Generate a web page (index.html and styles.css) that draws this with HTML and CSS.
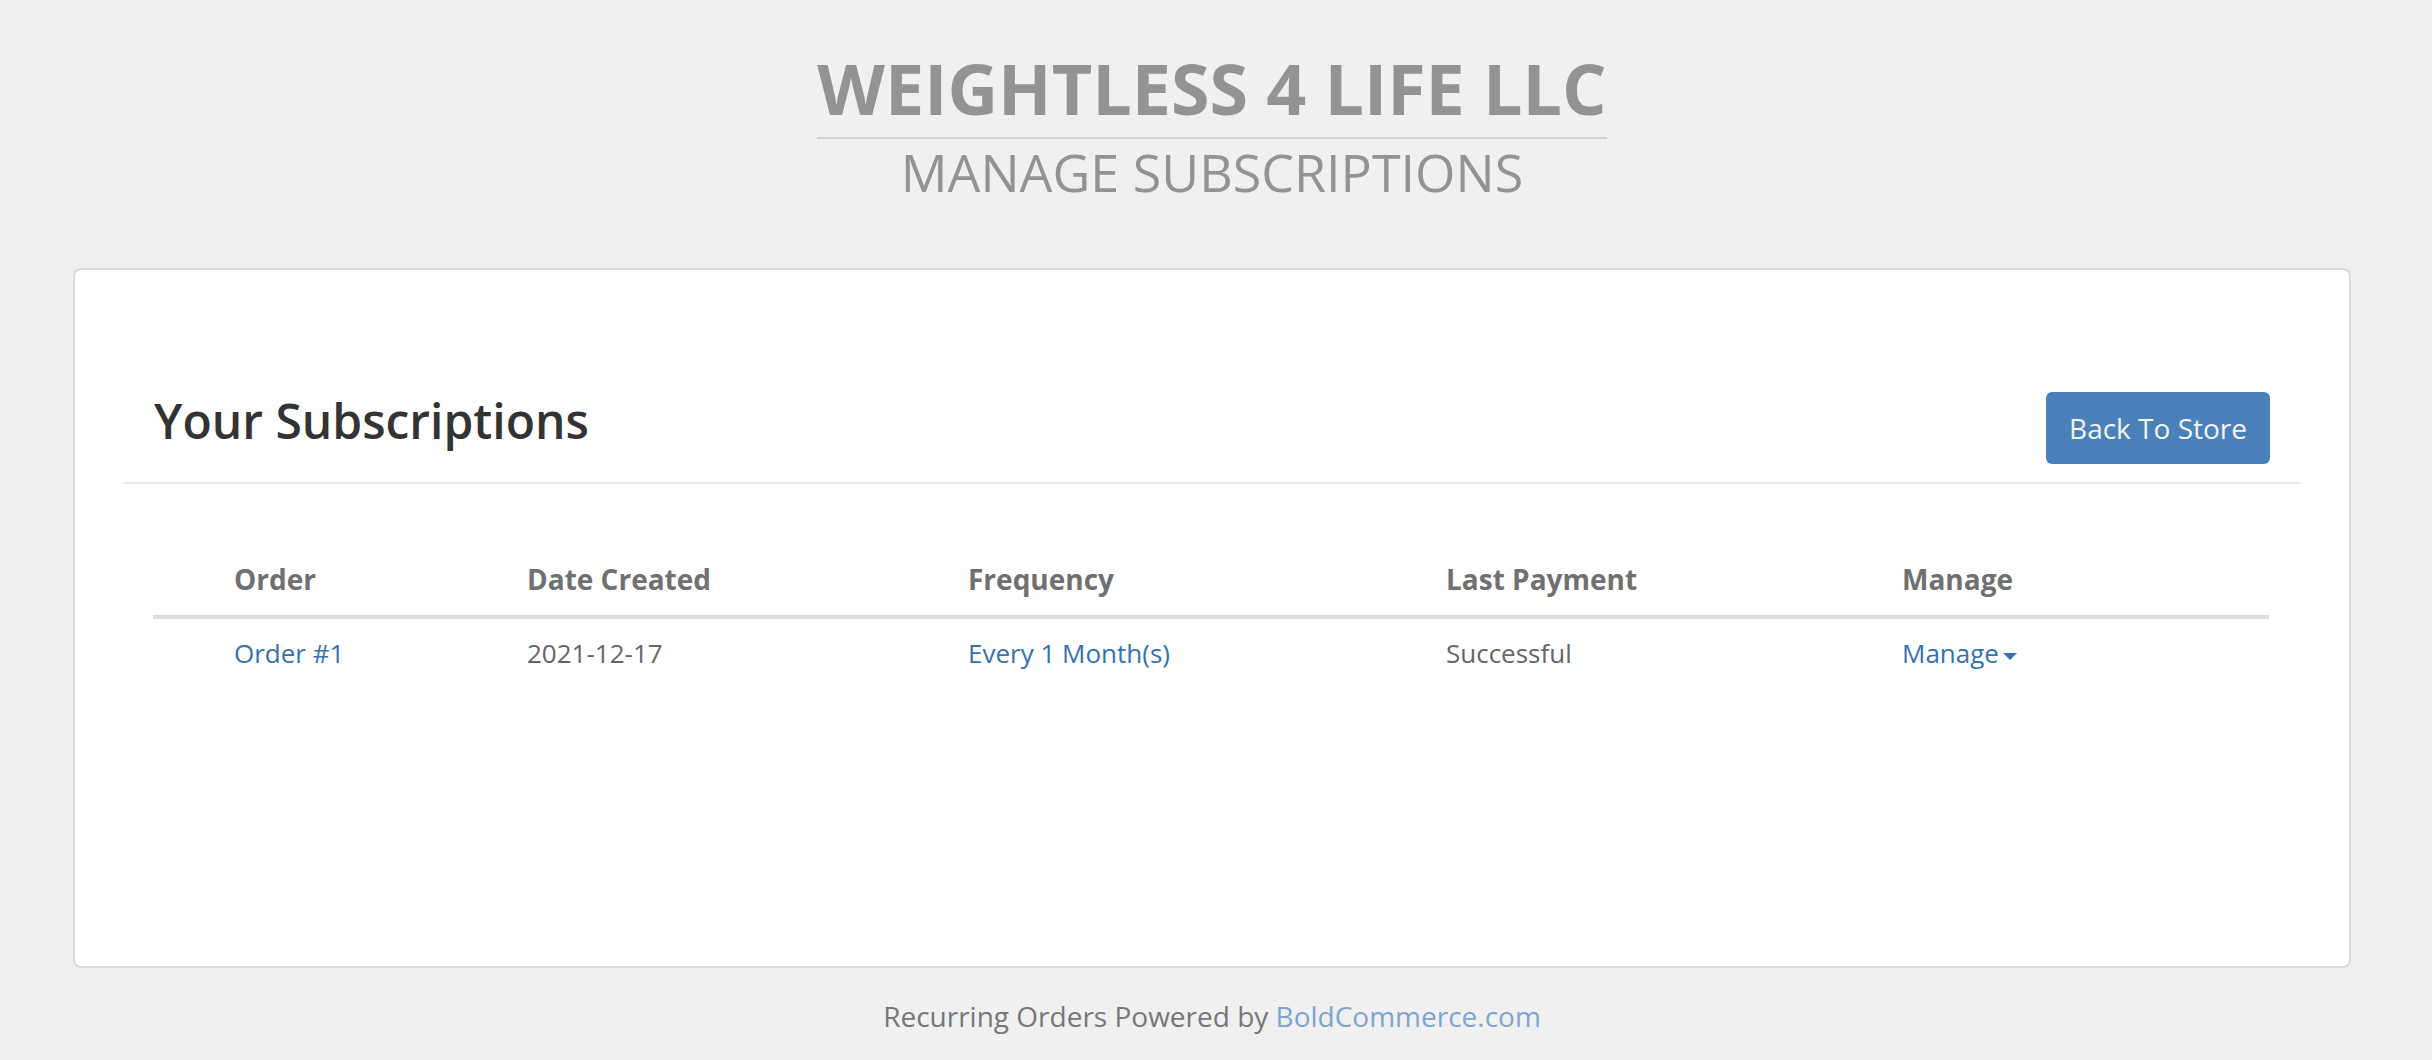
FILE: index.html
```html
<!DOCTYPE html>
<html lang="en">
<head>
<meta charset="utf-8">
<title>Manage Subscriptions</title>
<link rel="stylesheet" href="styles.css">
</head>
<body>
<div class="page">
  <header class="brand">
    <h1 class="brand-name">WEIGHTLESS 4 LIFE LLC</h1>
    <div class="brand-sub">MANAGE SUBSCRIPTIONS</div>
  </header>

  <section class="panel">
    <div class="panel-head">
      <h2 class="panel-title">Your Subscriptions</h2>
      <a class="btn" href="#">Back To Store</a>
    </div>

    <table class="subs">
      <colgroup>
        <col class="c1"><col class="c2"><col class="c3"><col class="c4"><col class="c5">
      </colgroup>
      <thead>
        <tr>
          <th>Order</th>
          <th>Date Created</th>
          <th>Frequency</th>
          <th>Last Payment</th>
          <th>Manage</th>
        </tr>
      </thead>
      <tbody>
        <tr>
          <td><a class="link" href="#">Order #1</a></td>
          <td>2021-12-17</td>
          <td><a class="link" href="#">Every 1 Month(s)</a></td>
          <td>Successful</td>
          <td><a class="link" href="#">Manage<span class="caret"></span></a></td>
        </tr>
      </tbody>
    </table>
  </section>

  <footer class="foot">Recurring Orders Powered by <a class="foot-link" href="#">BoldCommerce.com</a></footer>
</div>
</body>
</html>
```

FILE: styles.css
```css
html, body {
  margin: 0;
  padding: 0;
  background: #f0f0f0;
}
body {
  font-family: "Open Sans", "Liberation Sans", sans-serif;
  color: #666;
}
.page {
  padding: 0 81px 0 73px;
}
.brand {
  display: flex;
  flex-direction: column;
  align-items: center;
  padding-top: 53px;
}
.brand-name {
  margin: 0;
  font-size: 70px;
  line-height: 71px;
  font-weight: 700;
  color: #939393;
  padding-bottom: 13px;
  border-bottom: 2px solid #d3d3d3;
}
.brand-sub {
  margin-top: 6px;
  font-size: 52px;
  line-height: 53px;
  font-weight: 400;
  color: #939393;
}
.panel {
  margin-top: 70px;
  background: #fff;
  border: 2px solid #dadada;
  border-radius: 8px;
  height: 700px;
  box-sizing: border-box;
}
.panel-head {
  display: flex;
  justify-content: space-between;
  align-items: baseline;
  margin: 0 49px;
  padding: 122px 30px 18px 30px;
  border-bottom: 2px solid #e8e8e8;
}
.panel-title {
  margin: 0;
  font-size: 48px;
  line-height: 53px;
  font-weight: 600;
  color: #333;
}
.btn {
  display: block;
  background: #4a81bb;
  color: #f4f4f4;
  text-decoration: none;
  font-size: 28px;
  line-height: 40px;
  padding: 16px 23px;
  border-radius: 6px;
}
.subs {
  margin: 59px 0 0 78px;
  width: 2116px;
  border-collapse: collapse;
  table-layout: fixed;
}
.c1 { width: 358px; }
.c2 { width: 441px; }
.c3 { width: 478px; }
.c4 { width: 456px; }
.c5 { width: 383px; }
.subs th {
  text-align: left;
  font-size: 28px;
  line-height: 40px;
  font-weight: 700;
  color: #707070;
  padding: 16px 16px;
  border-bottom: 4px solid #dddddd;
}
.subs td {
  font-size: 26px;
  line-height: 36px;
  color: #666;
  padding: 16px 16px;
}
.subs th:first-child,
.subs td:first-child {
  padding-left: 81px;
}
.link {
  color: #3571b1;
  text-decoration: none;
}
.caret {
  display: inline-block;
  width: 0;
  height: 0;
  margin-left: 4px;
  vertical-align: middle;
  border-top: 7px solid #3571b1;
  border-left: 7px solid transparent;
  border-right: 7px solid transparent;
}
.foot {
  margin-top: 28px;
  text-align: center;
  font-size: 28px;
  line-height: 40px;
  color: #777;
}
.foot-link {
  color: #7ea5cf;
  text-decoration: none;
}
```
